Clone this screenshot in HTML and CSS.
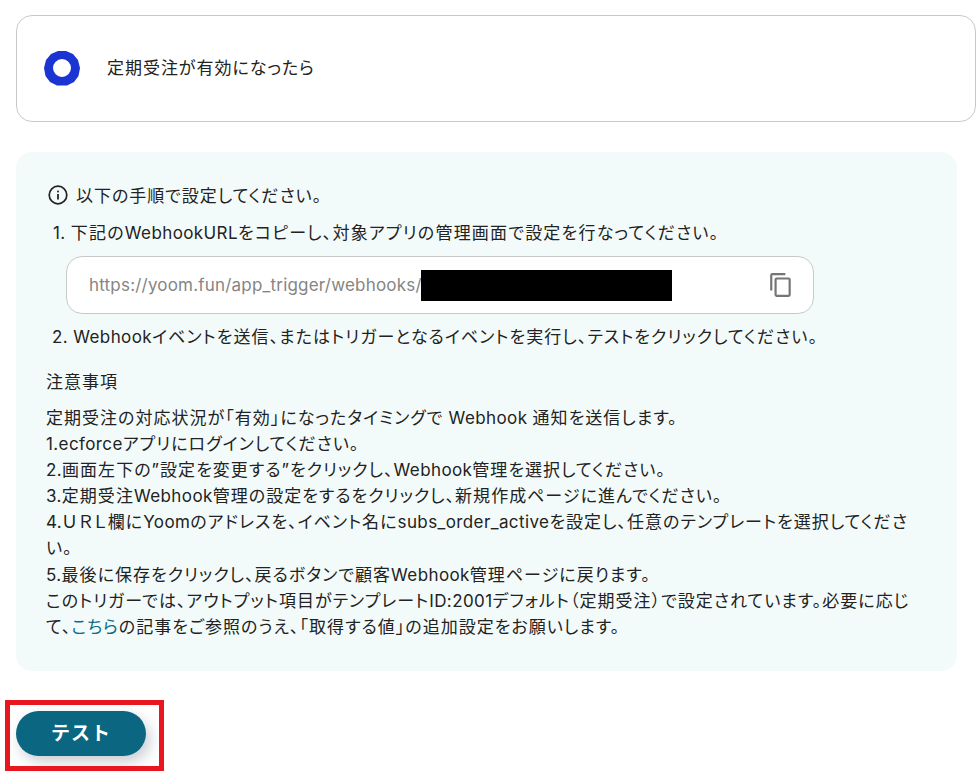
FILE: index.html
```html
<!DOCTYPE html>
<html lang="ja">
<head>
<meta charset="utf-8">
<title>定期受注が有効になったら</title>
<link rel="stylesheet" href="styles.css">
</head>
<body>
<main class="page">
  <section class="trigger-card">
    <svg class="trigger-icon" viewBox="0 0 36 36" width="36" height="36" aria-hidden="true">
      <path fill-rule="evenodd" fill="#1b35d3" d="M14 1 22 1 29 4 34 10 36 18 34.500 26 30 32 23 35.500 13 35.500 6 32 1.500 26 0 18 2 10 7 4ZM18 9a9 9 0 1 0 0 18a9 9 0 1 0 0-18Z"/>
    </svg>
    <span class="trigger-label">定期受注が有効になったら</span>
  </section>

  <section class="guide">
    <div class="guide-head">
      <svg class="info-icon" viewBox="0 0 20 20" width="20" height="20" aria-hidden="true">
        <circle cx="10" cy="10" r="8.800" fill="none" stroke="#222" stroke-width="1.700"/>
        <rect x="9.100" y="9" width="1.800" height="5.500" fill="#222"/>
        <rect x="9.100" y="5.600" width="1.800" height="1.800" fill="#222"/>
      </svg>
      <span>以下の手順で設定してください。</span>
    </div>
    <p class="step step-one"><span class="lat">1. </span>下記の<span class="lat">WebhookURL</span>をコピーし、対象アプリの管理画面で設定を行なってください。</p>
    <div class="url-box">
      <span class="url-text">https://yoom.fun/app_trigger/webhooks/</span>
      <span class="redaction"></span>
      <svg class="copy-icon" viewBox="0 0 24 24" width="26" height="26" aria-hidden="true">
        <path fill="#757575" d="M16 1H4a2 2 0 0 0-2 2v14h2V3h12V1Zm3 4H8a2 2 0 0 0-2 2v14a2 2 0 0 0 2 2h11a2 2 0 0 0 2-2V7a2 2 0 0 0-2-2Zm0 16H8V7h11v14Z"/>
      </svg>
    </div>
    <p class="step step-two"><span class="lat">2. Webhook</span>イベントを送信、またはトリガーとなるイベントを実行し、テストをクリックしてください。</p>
    <h2 class="notes-title">注意事項</h2>
    <div class="notes">
      <p>定期受注の対応状況が「有効」になったタイミングで<span class="lat"> Webhook </span>通知を送信します。</p>
      <p><span class="lat">1.ecforce</span>アプリにログインしてください。</p>
      <p><span class="lat">2.</span>画面左下の”設定を変更する”をクリックし、<span class="lat">Webhook</span>管理を選択してください。</p>
      <p><span class="lat">3.</span>定期受注<span class="lat">Webhook</span>管理の設定をするをクリックし、新規作成ページに進んでください。</p>
      <p><span class="lat">4.</span><span class="wide">ＵＲＬ</span>欄に<span class="lat">Yoom</span>のアドレスを、イベント名に<span class="lat">subs_order_active</span>を設定し、任意のテンプレートを選択してください。</p>
      <p><span class="lat">5.</span>最後に保存をクリックし、戻るボタンで顧客<span class="lat">Webhook</span>管理ページに戻ります。</p>
      <p>このトリガーでは、アウトプット項目がテンプレート<span class="lat">ID:2001</span>デフォルト（定期受注）で設定されています。必要に応じて、<a href="#">こちら</a>の記事をご参照のうえ、「取得する値」の追加設定をお願いします。</p>
    </div>
  </section>

  <div class="actions">
    <button class="test-button" type="button">テスト</button>
    <span class="highlight"></span>
  </div>
</main>
</body>
</html>
```

FILE: styles.css
```css
* { box-sizing: border-box; }
html, body { margin: 0; padding: 0; background: #fff; }
body {
  width: 980px;
  height: 772px;
  overflow: hidden;
  font-family: Inter, "Noto Sans CJK JP", sans-serif;
  font-size: 17px;
  letter-spacing: 0.96px;
  color: #222;
  font-feature-settings: "palt";
}
.lat { letter-spacing: 0.4px; }
.wide { letter-spacing: 2px; }
.page { padding: 15px 4px 0 16px; }
.trigger-card {
  display: flex;
  align-items: center;
  gap: 27px;
  height: 107px;
  padding-left: 27px;
  padding-bottom: 1px;
  border: 1px solid #c9c9c9;
  border-radius: 16px;
  background: #fff;
}
.trigger-icon { flex: none; }
.trigger-label { position: relative; top: -2px; }
.guide {
  width: 941px;
  height: 519px;
  margin-top: 30px;
  padding: 30px 41px 0 30px;
  border-radius: 16px;
  background: #f3fbfa;
}
.guide-head { display: flex; align-items: center; gap: 8px; height: 26px; margin-left: 2px; position: relative; top: -1px; }
.info-icon { flex: none; position: relative; top: 1px; }
.step { margin: 0; line-height: 26px; }
.step-one { margin-top: 12px; margin-left: 7px; letter-spacing: 1.2px; }
.step-two { margin-top: 10px; margin-left: 6px; letter-spacing: 1.05px; }
.url-box {
  display: flex;
  align-items: center;
  width: 748px;
  height: 58px;
  margin: 10px 0 0 20px;
  padding: 0 19px 0 22px;
  border: 1px solid #c9c9c9;
  border-radius: 16px;
  background: #fff;
}
.url-text { flex: none; width: 332px; overflow: hidden; color: #858585; white-space: nowrap; letter-spacing: 0.2px; }
.redaction { flex: none; width: 251px; height: 31px; background: #000; }
.copy-icon { flex: none; margin-left: auto; }
.notes-title { margin: 19px 0 0; font-size: 17px; font-weight: 400; line-height: 26px; }
.notes { margin-top: 10px; line-height: 26.100px; letter-spacing: 1.02px; }
.notes p { margin: 0; }
.notes a { color: #0b6a85; text-decoration: none; }
.actions { position: relative; margin-top: 40px; }
.test-button {
  display: block;
  width: 130px;
  height: 45px;
  padding: 0 0 4px;
  border: 0;
  border-radius: 23px;
  background: #0b6781;
  color: #fff;
  font: 700 19px Inter, "Noto Sans CJK JP", sans-serif;
  letter-spacing: 1px;
  box-shadow: 4px 6px 14px rgba(60, 80, 95, 0.28);
}
.highlight {
  position: absolute;
  left: -11px;
  top: -11px;
  width: 159px;
  height: 71px;
  border: 5px solid #e8171f;
  pointer-events: none;
}
```
